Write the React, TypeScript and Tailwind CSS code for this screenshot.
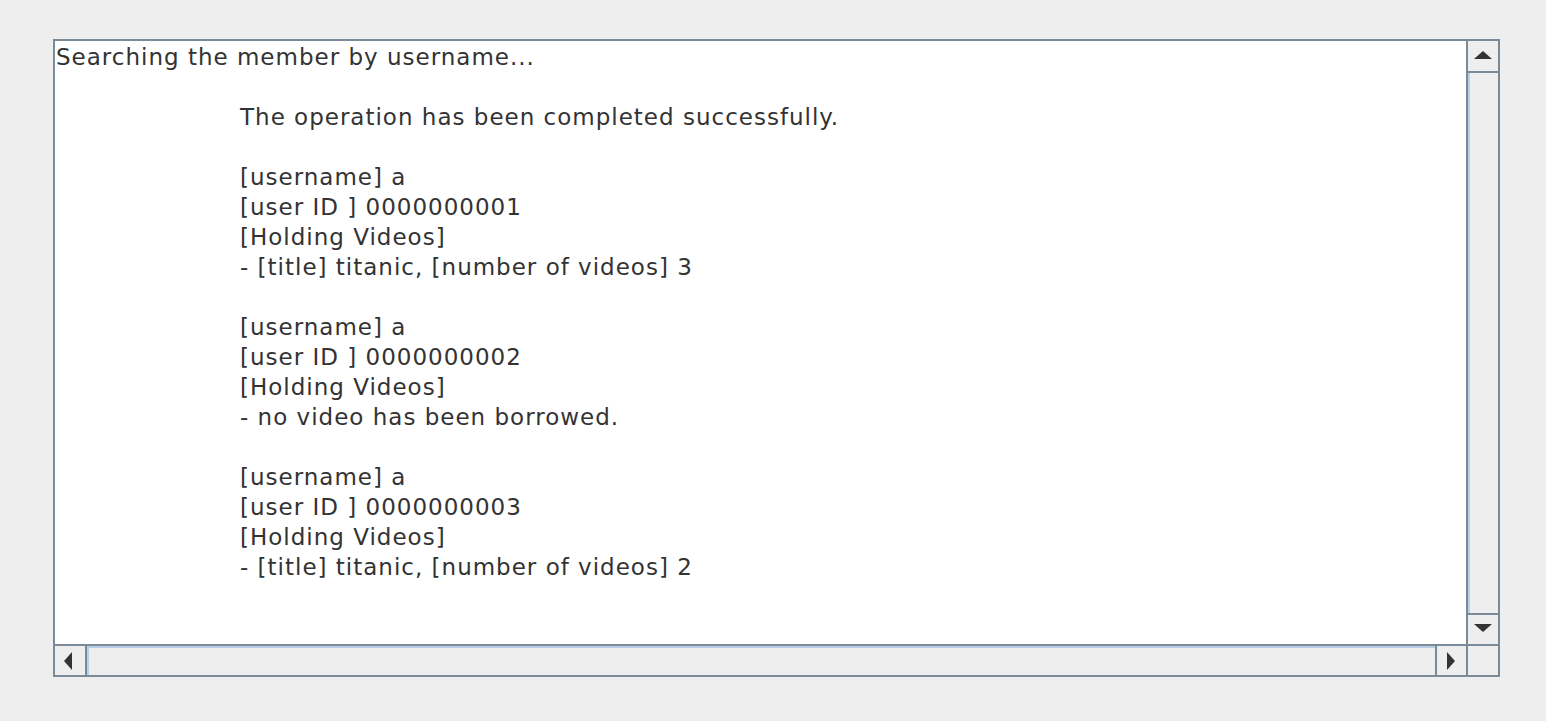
import React from 'react'

const lines: { text: string; indent?: boolean }[] = [
  { text: 'Searching the member by username...' },
  { text: '' },
  { text: 'The operation has been completed successfully.', indent: true },
  { text: '' },
  { text: '[username] a', indent: true },
  { text: '[user ID ] 0000000001', indent: true },
  { text: '[Holding Videos]', indent: true },
  { text: '- [title] titanic, [number of videos] 3', indent: true },
  { text: '' },
  { text: '[username] a', indent: true },
  { text: '[user ID ] 0000000002', indent: true },
  { text: '[Holding Videos]', indent: true },
  { text: '- no video has been borrowed.', indent: true },
  { text: '' },
  { text: '[username] a', indent: true },
  { text: '[user ID ] 0000000003', indent: true },
  { text: '[Holding Videos]', indent: true },
  { text: '- [title] titanic, [number of videos] 2', indent: true },
]

const Arrow = ({ dir }: { dir: 'up' | 'down' | 'left' | 'right' }) => {
  const pts = {
    up: '0,8 18,8 9,0',
    down: '0,0 18,0 9,8',
    left: '8,0 8,18 0,9',
    right: '0,0 0,18 8,9',
  }[dir]
  const horiz = dir === 'up' || dir === 'down'
  return (
    <svg width={horiz ? 18 : 8} height={horiz ? 8 : 18} viewBox={horiz ? '0 0 18 8' : '0 0 8 18'}>
      <polygon points={pts} fill="#333333" />
    </svg>
  )
}

const App = () => {
  return (
    <section className="w-full h-[721px] bg-[#eeeeee] pt-[39px] pl-[53px]">
      <div className="w-[1447px] h-[638px] border-2 border-[#7a8a99] grid grid-cols-[1fr_32px] grid-rows-[1fr_31px] bg-white">
        {/* text area */}
        <div className="bg-white pt-[1px] pl-[1px] overflow-hidden text-[#333333] text-[23px] leading-[30px] tracking-[1px] font-['DejaVu_Sans',sans-serif]">
          {lines.map((l, i) => (
            <div key={i} className={`h-[30px] whitespace-pre ${l.indent ? 'pl-[184px]' : ''}`}>
              {l.text}
            </div>
          ))}
        </div>

        {/* vertical scrollbar */}
        <div className="border-l-2 border-[#7a8a99] flex flex-col bg-[#eeeeee]">
          <div className="h-[32px] border-b-2 border-[#7a8a99] flex items-center justify-center pb-[2px]">
            <Arrow dir="up" />
          </div>
          <div className="flex-1 border-l-2 border-l-[#b8cfe5] bg-[#eeeeee]" />
          <div className="h-[31px] border-t-2 border-[#7a8a99] flex items-center justify-center pb-[3px]">
            <Arrow dir="down" />
          </div>
        </div>

        {/* horizontal scrollbar */}
        <div className="border-t-2 border-[#7a8a99] flex bg-[#eeeeee]">
          <div className="w-[32px] border-r-2 border-[#7a8a99] flex items-center justify-center pr-[4px]">
            <Arrow dir="left" />
          </div>
          <div className="flex-1 border-l-2 border-l-[#b8cfe5] border-t-2 border-t-[#b8cfe5]" />
          <div className="w-[31px] border-l-2 border-[#7a8a99] flex items-center justify-center pr-[2px]">
            <Arrow dir="right" />
          </div>
        </div>

        {/* corner */}
        <div className="border-t-2 border-l-2 border-[#7a8a99] bg-[#eeeeee]" />
      </div>
    </section>
  )
}

export default App
